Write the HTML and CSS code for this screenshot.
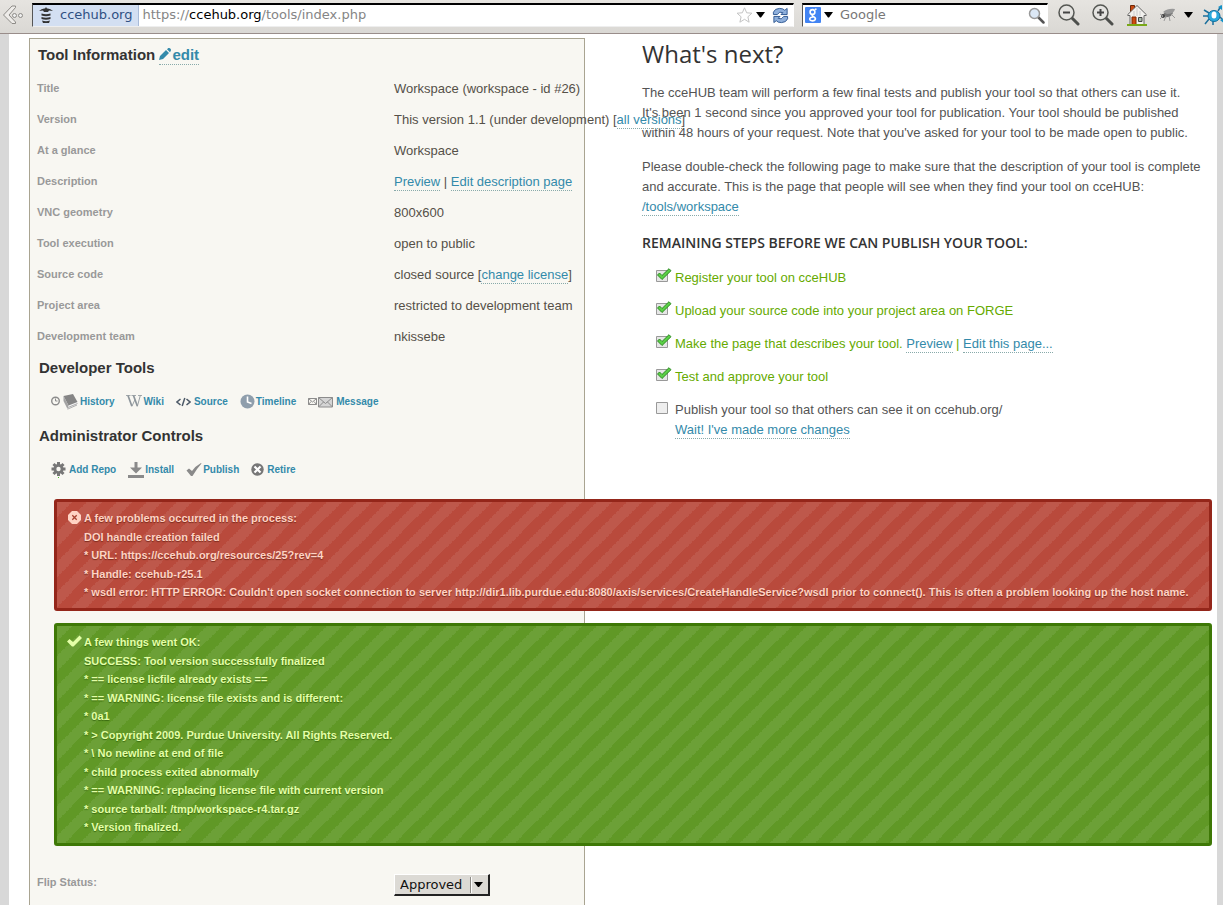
FILE: index.html
```html
<!DOCTYPE html>
<html lang="en">
<head>
<meta charset="utf-8">
<title>Tool Status - cceHUB</title>
<link rel="stylesheet" href="styles.css">
</head>
<body>
<header class="toolbar">
  <button class="tb-button back" aria-label="Back">
    <svg width="22" height="20" viewBox="0 0 22 20"><path d="M10 1h3.500v1.500L7 10l6.500 7v1.500H10L1.500 10z" fill="#eeece9" stroke="#8d8b87"/><g fill="#eee" stroke="#8d8b87"><circle cx="12.500" cy="10.500" r="2"/><circle cx="18.500" cy="10.500" r="2"/></g></svg>
  </button>
  <div class="urlbar">
    <span class="identity">
      <svg width="16" height="16" viewBox="0 0 16 16" fill="#333"><path d="M1 4q3-3 6-2.500L8 0l1 1.500Q12 1 15 4l-4-.5L10 5H6L5 3.500z"/><path d="M3.500 6.500q4.500 1.500 9 0v2q-4.500 1.500-9 0zM3.500 10q4.500 1.500 9 0v2q-4.500 1.500-9 0zM4 13.500q4 1.500 8 0L11 16H5z"/></svg>
      <span>ccehub.org</span>
    </span>
    <span class="url">https://<b>ccehub.org</b>/tools/index.php</span>
    <button class="tb-button" aria-label="Bookmark this page"><svg width="17" height="16" viewBox="0 0 16 16"><path d="M8 .8l2.200 5 5.200.4-4 3.600 1.200 5.400L8 12.300l-4.600 2.900 1.200-5.400-4-3.600 5.200-.4z" fill="#fff" stroke="#c4c4c4"/></svg></button>
    <button class="tb-button" aria-label="Show history"><svg width="9" height="6" viewBox="0 0 9 6"><path d="M0 0h9L5 5.500H4z"/></svg></button>
    <button class="tb-button reload" aria-label="Reload"><svg width="17" height="17" viewBox="0 0 18 18" fill="#8fb0dc" stroke="#2c5590"><path d="M1.500 8V5.500Q3 1.500 8 1.500q4 0 5.500 2l2.500-2V8H9.500L11.500 6Q8 4 5.500 8z"/><path d="M16.500 10v2.500Q15 16.500 10 16.500q-4 0-5.500-2l-2.500 2V10h6.500L6.500 12q3.500 2 6-2z"/></svg></button>
  </div>
  <div class="searchbar">
    <svg width="16" height="16" viewBox="0 0 16 16"><rect width="16" height="16" rx="1" fill="#4284f3"/><g fill="none" stroke="#fff" stroke-width="1.600"><circle cx="7.500" cy="5" r="2.400"/><path d="M10 2.500l1.500-.5M8.500 7.400Q6 8.500 8 9.500q3 1.200 2.300 3-1 1.700-3.600 1.300-2.600-.6-1.700-2.600.7-1.200 3-1.200"/></g></svg>
    <svg width="9" height="6" viewBox="0 0 9 6"><path d="M0 0h9L5 5.500H4z"/></svg>
    <input class="search-input" type="text" placeholder="Google" aria-label="Search">
    <svg width="17" height="17" viewBox="0 0 17 17"><path d="M10 10l5.500 5.500" stroke="#555" stroke-width="2.500" stroke-linecap="round"/><circle cx="6.500" cy="6.500" r="5" fill="#dce8f6" stroke="#999" stroke-width="1.500"/></svg>
  </div>
  <button class="tb-button" aria-label="Zoom out"><svg width="22" height="22" viewBox="0 0 22 22"><path d="M14 14l6 6" stroke="#4d4f4c" stroke-width="3" stroke-linecap="round"/><circle cx="8.500" cy="8.500" r="7.500" fill="#e4e3e0" stroke="#555753" stroke-width="1.500"/><path d="M5 8.500h7" stroke="#444" stroke-width="2"/></svg></button>
  <button class="tb-button zoom-in" aria-label="Zoom in"><svg width="22" height="22" viewBox="0 0 22 22"><path d="M14 14l6 6" stroke="#4d4f4c" stroke-width="3" stroke-linecap="round"/><circle cx="8.500" cy="8.500" r="7.500" fill="#e4e3e0" stroke="#555753" stroke-width="1.500"/><path d="M5 8.500h7M8.500 5v7" stroke="#444" stroke-width="2"/></svg></button>
  <button class="tb-button home" aria-label="Home"><svg width="20" height="22" viewBox="0 0 20 22"><path d="M3.500 1.500h4v7h-4z" fill="#c94a12" stroke="#6e2705"/><path d="M10 1.500L.8 10.500v1H3v9h14v-9h2.200v-1z" fill="#f2f1ee" stroke="#666"/><path d="M7 7v5M10 4v8M13 7v5" stroke="#ccc"/><path d="M5 13h4v7.500H5z" fill="#cf4a10" stroke="#7c2b06"/><path d="M11.500 13.500h3.500v4h-3.500z" fill="#aba" stroke="#444"/><path d="M0 21h20" stroke="#79a818" stroke-width="2"/></svg></button>
  <button class="tb-button" aria-label="Firebug"><svg width="17" height="14" viewBox="0 0 17 14"><ellipse cx="9" cy="6" rx="5" ry="3" fill="#777" transform="rotate(-20 9 6)"/><path d="M4 4q5-4 12-3-1 5-8 5z" fill="#999"/><circle cx="4" cy="8" r="2" fill="#444"/><path d="M1 6l3 2-3 3M7 8l-2 5M10 8l1 5M12 6l4 4" stroke="#999" fill="none"/></svg></button>
  <button class="tb-button" aria-label="More"><svg width="9" height="6" viewBox="0 0 9 6"><path d="M0 0h9L5 5.500H4z"/></svg></button>
  <button class="tb-button bug" aria-label="Live bug"><svg width="22" height="20" viewBox="0 0 22 20"><path d="M1 5l5 3M0 11h5M2 19l4-5M15 6l3-5M17 12l5 5M10 16v4" stroke="#1b6f9c" stroke-width="1.500"/><path d="M15 2l4-2v5zM17 15l5-2v6z" fill="#1492c8"/><ellipse cx="11" cy="11" rx="6" ry="5.500" fill="#29a9dd" stroke="#14709e"/><ellipse cx="11" cy="10" rx="2.500" ry="3.500" fill="#fff"/></svg></button>
</header>

<main class="page">
  <div class="panel-backdrop"></div>
  <section class="tool-info">
    <h3 class="panel-title">Tool Information <a class="link" href="#edit"><svg width="12" height="12" viewBox="0 0 12 12" fill="#338aaa"><path d="M0 12l1-4L7 2l3 3-6 6zM8 1.200L9.300 0Q10.300-.3 11.500.7q.8 1 .3 2L11 4.200z"/></svg>edit</a></h3>
    <table class="facts">
      <tr><th scope="row">Title</th><td>Workspace (workspace - id #26)</td></tr>
      <tr><th scope="row">Version</th><td>This version 1.1 (under development) [<a class="link" href="#versions">all versions</a>]</td></tr>
      <tr><th scope="row">At a glance</th><td>Workspace</td></tr>
      <tr><th scope="row">Description</th><td><a class="link" href="#preview">Preview</a> | <a class="link" href="#description">Edit description page</a></td></tr>
      <tr><th scope="row">VNC geometry</th><td>800x600</td></tr>
      <tr><th scope="row">Tool execution</th><td>open to public</td></tr>
      <tr><th scope="row">Source code</th><td>closed source [<a class="link" href="#license">change license</a>]</td></tr>
      <tr><th scope="row">Project area</th><td>restricted to development team</td></tr>
      <tr><th scope="row">Development team</th><td>nkissebe</td></tr>
    </table>
    <h3 class="group-title">Developer Tools</h3>
    <ul class="actions">
      <li><a href="#history"><svg width="28" height="16" viewBox="0 0 28 16"><circle cx="4.500" cy="7" r="3.800" fill="none" stroke="#8c8c8c" stroke-width="1.400"/><path d="M4.500 4.500V7h2" fill="none" stroke="#8c8c8c"/><path d="M12.500 2v5l4 8.500 10-4.500V8z" fill="#f6f6f6"/><path d="M12.500 2L22 0l4.500 8-9 3.500z" fill="#858585"/><path d="M12.500 2l5 9.500-1 3.500-4-8z" fill="#a2a2a2"/><path d="M17 13.500l9.500-4M16.500 15.200l9.500-4.200" stroke="#999" stroke-width=".8"/></svg>History</a></li>
      <li><a href="#wiki"><svg width="16" height="16" viewBox="0 0 16 16" fill="none" stroke="#8d959b"><path d="M0 1.500h4.500M5.500 1.500h4.500M12 1.500h4" stroke-width=".8"/><path d="M2 1.500l3.800 10.500M7.500 1.500l3.800 10.500" stroke-width="1.700"/><path d="M5.800 12.500l3-6.500M11.300 12.500l3-11" stroke-width=".9"/></svg>Wiki</a></li>
      <li><a href="#source"><svg class="wide-gap" width="15" height="16" viewBox="0 0 15 16" fill="none" stroke="#4d5a68" stroke-width="1.500"><path d="M4.500 5L1 8l3.500 3M10.500 5L14 8l-3.500 3M8.800 4l-2.600 8"/></svg>Source</a></li>
      <li><a href="#timeline"><svg width="15" height="16" viewBox="0 0 15 16"><circle cx="7.500" cy="7.500" r="7" fill="#8f9eac"/><path d="M7.500 2.500V8l4 1.500" fill="none" stroke="#fff" stroke-width="1.600"/></svg>Timeline</a></li>
      <li><a href="#message"><svg class="wide-gap" width="25" height="16" viewBox="0 0 25 16" fill="none" stroke="#8c8c8c"><path d="M.5 4.500h8v6h-8zM.5 4.500l4 3.500 4-3.500M.5 10.500L3 7.500M8.500 10.500L6 7.500"/><path d="M10.500 3.500h14v9.500h-14z" fill="#d5d5d5"/><path d="M10.500 3.500l7 6 7-6M10.500 13l5-5M24.500 13l-5-5"/></svg>Message</a></li>
    </ul>
    <h3 class="group-title">Administrator Controls</h3>
    <ul class="actions">
      <li><a href="#repo"><svg class="wide-gap" width="15" height="18" viewBox="0 0 15 18"><g stroke="#777" stroke-width="3"><path d="M7.500 1v14M.5 8h14M2.500 3l10 10M12.500 3l-10 10"/></g><circle cx="7.500" cy="8" r="5" fill="#777"/><circle cx="7.500" cy="8" r="2.200" fill="#f8f7f2"/><path d="M7 16.500h1" stroke="#4b2"/></svg>Add Repo</a></li>
      <li><a href="#install"><svg width="16" height="16" viewBox="0 0 16 16" fill="#8a8a8a"><path d="M6.500 0h3v5.500H14l-6 6-6-6h4.500zM0 13h16v3H0z"/></svg>Install</a></li>
      <li><a href="#publish"><svg width="16" height="16" viewBox="0 0 16 16"><path d="M.5 8.500L3 6.500 6 9Q9.500 4 15 1l.5.500Q10.500 7 6.500 14H5z" fill="#8a8a8a"/></svg>Publish</a></li>
      <li><a href="#retire"><svg class="wide-gap" width="13" height="16" viewBox="0 0 13 16"><circle cx="6.500" cy="7.500" r="6.200" fill="#777"/><path d="M3.500 4.500l6 6M9.500 4.500l-6 6" stroke="#fff" stroke-width="2.200"/></svg>Retire</a></li>
    </ul>
  </section>

  <aside class="next">
    <h2>What's next?</h2>
    <p>The cceHUB team will perform a few final tests and publish your tool so that others can use it.<br>It's been 1 second since you approved your tool for publication. Your tool should be published<br>within 48 hours of your request. Note that you've asked for your tool to be made open to public.</p>
    <p>Please double-check the following page to make sure that the description of your tool is complete and accurate. This is the page that people will see when they find your tool on cceHUB: <a class="link" href="#workspace">/tools/workspace</a></p>
    <h4>REMAINING STEPS BEFORE WE CAN PUBLISH YOUR TOOL:</h4>
    <ul class="steps">
      <li class="done"><svg width="16" height="15" viewBox="0 0 16 15"><path d="M.5 2.500h11v11H.5z" fill="#e6e6e6" stroke="#999"/><path d="M1.500 7l2-2 2.500 2.500L13 .7l2 2L6 11.500z" fill="#5bd046" stroke="#2c8a22"/></svg>Register your tool on cceHUB</li>
      <li class="done"><svg width="16" height="15" viewBox="0 0 16 15"><path d="M.5 2.500h11v11H.5z" fill="#e6e6e6" stroke="#999"/><path d="M1.500 7l2-2 2.500 2.500L13 .7l2 2L6 11.500z" fill="#5bd046" stroke="#2c8a22"/></svg>Upload your source code into your project area on FORGE</li>
      <li class="done"><svg width="16" height="15" viewBox="0 0 16 15"><path d="M.5 2.500h11v11H.5z" fill="#e6e6e6" stroke="#999"/><path d="M1.500 7l2-2 2.500 2.500L13 .7l2 2L6 11.500z" fill="#5bd046" stroke="#2c8a22"/></svg><span>Make the page that describes your tool. <a class="link" href="#preview">Preview</a> | <a class="link" href="#page">Edit this page...</a></span></li>
      <li class="done"><svg width="16" height="15" viewBox="0 0 16 15"><path d="M.5 2.500h11v11H.5z" fill="#e6e6e6" stroke="#999"/><path d="M1.500 7l2-2 2.500 2.500L13 .7l2 2L6 11.500z" fill="#5bd046" stroke="#2c8a22"/></svg>Test and approve your tool</li>
      <li><svg width="16" height="15" viewBox="0 0 16 15"><path d="M.5 2.500h11v11H.5z" fill="#eee" stroke="#999"/></svg><span>Publish your tool so that others can see it on ccehub.org/<br><a class="link" href="#changes">Wait! I've made more changes</a></span></li>
    </ul>
  </aside>

  <div class="alerts">
    <section class="alert error">
      <svg width="15" height="13" viewBox="0 0 15 13"><path d="M5 0h5l4 4v5l-4 4H5L1 9V4z" fill="#ffd3c4"/><path d="M5.300 4.300l4.400 4.400M9.700 4.300L5.300 8.700" stroke="#a8402f" stroke-width="1.300"/></svg>
      <div class="alert-text">
        <p>A few problems occurred in the process:</p>
        <p>DOI handle creation failed</p>
        <p>* URL: https://ccehub.org/resources/25?rev=4</p>
        <p>* Handle: ccehub-r25.1</p>
        <p>* wsdl error: HTTP ERROR: Couldn't open socket connection to server http://dir1.lib.purdue.edu:8080/axis/services/CreateHandleService?wsdl prior to connect(). This is often a problem looking up the host name.</p>
      </div>
    </section>
    <section class="alert success">
      <svg width="15" height="13" viewBox="0 0 15 13"><path d="M0 6.500L2.500 4 6 7l6.500-6.500L15 3 6.500 11.500H5z" fill="#e4ffa8"/></svg>
      <div class="alert-text">
        <p>A few things went OK:</p>
        <p>SUCCESS: Tool version successfully finalized</p>
        <p>* == license licfile already exists ==</p>
        <p>* == WARNING: license file exists and is different:</p>
        <p>* 0a1</p>
        <p>* &gt; Copyright 2009. Purdue University. All Rights Reserved.</p>
        <p>* \ No newline at end of file</p>
        <p>* child process exited abnormally</p>
        <p>* == WARNING: replacing license file with current version</p>
        <p>* source tarball: /tmp/workspace-r4.tar.gz</p>
        <p>* Version finalized.</p>
      </div>
    </section>
  </div>

  <form class="status">
    <label for="status">Flip Status:</label>
    <span class="select-box">
      <select id="status"><option>Approved</option></select>
      <svg width="20" height="18" viewBox="0 0 20 18"><path d="M1.500 1v16" stroke="#8d8b86"/><path d="M2.500 1v16" stroke="#fff"/><path d="M5 6h9l-4 5H9z"/></svg>
    </span>
  </form>
</main>
</body>
</html>
```
FILE: styles.css
```css
* { box-sizing: border-box; }

body {
  margin: 0;
  min-height: 100vh;
  display: flex;
  flex-direction: column;
  background: #d8d8d8;
  color: #545454;
  font: 13px/20px "Liberation Sans", Arial, sans-serif;
}

h2, h3, h4, p, ul { margin: 0; padding: 0; }
ul { list-style: none; }

.toolbar {
  display: flex;
  align-items: center;
  height: 34px;
  padding: 0 0 4px;
  border-bottom: 1px solid #998d8a;
  background: linear-gradient(#e6e4e0, #dad8d4);
  font: 13px/20px "DejaVu Sans", sans-serif;
  overflow: hidden;
}

.toolbar svg { display: block; flex: none; }

.tb-button {
  flex: none;
  padding: 0;
  border: 0;
  background: none;
}

.back { margin: 0 8px 0 2px; }
.zoom-in { margin: 0 13px 0 12px; }
.home { margin-right: 12px; }
.bug { margin: 0 -2px 0 10px; }
.tb-button:nth-last-child(2) { margin-left: 8px; }

.urlbar, .searchbar {
  display: flex;
  align-items: center;
  height: 24px;
  border: 1px solid #555;
  border-top: 2px solid #000;
  border-right-color: #fff;
  border-bottom-color: #eee;
  background: #fff;
}

.urlbar { flex: 1; }

.identity {
  display: flex;
  align-items: center;
  gap: 6px;
  height: 21px;
  padding: 0 6px 0 5px;
  border-right: 1px solid #a9bbd8;
  background: #d3dff2;
  color: #2f5083;
}

.url {
  flex: 1;
  padding-left: 3px;
  color: #858585;
}

.url b { color: #000; font-weight: 400; }

.urlbar .tb-button + .tb-button { margin-left: 3px; }
.urlbar .reload.tb-button { margin: 0 4px 0 7px; }

.searchbar {
  width: 246px;
  margin: 0 10px 0 8px;
  padding: 0 2px;
  gap: 3px;
}

.search-input {
  flex: 1;
  min-width: 0;
  height: 20px;
  padding: 0 0 0 4px;
  border: 0;
  background: none;
  font: inherit;
}

.search-input::placeholder { color: #777; opacity: 1; }

.page {
  flex: 1;
  display: grid;
  grid-template-columns: 47% 1fr;
  grid-template-rows: auto auto 1fr;
  column-gap: 57px;
  margin: 0 6px 0 9px;
  padding: 4px 5px 0 20px;
  background: #fff;
}

.panel-backdrop {
  grid-area: 1 / 1 / 4 / 2;
  border: 1px solid #a9a491;
  border-bottom: 0;
  background: #f8f7f2;
}

.tool-info { grid-area: 1 / 1; padding: 7px 8px 0; }
.next { grid-area: 1 / 2; }
.alerts { grid-area: 2 / 1 / 3 / 3; padding: 5px 0 0 25px; }
.status { grid-area: 3 / 1; }
.tool-info, .alerts, .status { position: relative; }

.link {
  color: #338aaa;
  text-decoration: none;
  padding-bottom: 1px;
  border-bottom: 1px dotted #8aa;
}

h3 {
  color: #333;
  font-size: 15px;
  line-height: 20px;
}

.panel-title { padding: 0 1px 7px; }
.panel-title svg { margin-right: 1px; }
.group-title { padding: 0 2px; }

.facts {
  width: 100%;
  border-collapse: collapse;
  table-layout: fixed;
}

.facts th, .facts td {
  height: 31px;
  padding: 2px 0 0;
  text-align: left;
  white-space: nowrap;
}

.facts th {
  width: 357px;
  padding: 0;
  color: #999;
  font-size: 11px;
}

.facts td { color: #555048; }

.facts + .group-title { margin-top: 7px; }

.actions {
  display: flex;
  gap: 12px;
  padding: 14px 14px;
}

.actions a {
  display: flex;
  align-items: center;
  gap: 1px;
  height: 20px;
  color: #338aaa;
  font: bold 10px/20px "Liberation Sans", Arial, sans-serif;
  text-decoration: none;
}

.wide-gap { margin-right: 2px; }

.next h2 {
  margin-bottom: 13px;
  color: #333;
  font: 24px/32px "Open Sans", sans-serif;
}

.next p { margin-bottom: 14px; }

.next h4 {
  margin-top: 16px;
  color: #333;
  font: 600 14px/20px "Open Sans", sans-serif;
}

.steps { padding: 15px 0 0 14px; }

.steps li {
  display: flex;
  align-items: flex-start;
  gap: 3px;
  padding-bottom: 13px;
}

.steps .done { color: #6a0; }
.steps svg { flex: none; }

.alert {
  display: flex;
  align-items: flex-start;
  gap: 2px;
  margin-bottom: 12px;
  padding: 7px 4px 6px 10px;
  border: 3px solid;
  border-radius: 3px;
  font: bold 11px/18px "Liberation Sans", Arial, sans-serif;
  background-image: linear-gradient(-45deg, #0000 25%, #ffffff14 25%, #ffffff14 50%, #0000 50%, #0000 75%, #ffffff14 75%);
  background-size: 30px 30px;
}

.alert svg { flex: none; margin-top: 2px; }
.alert-text p:nth-child(odd) { margin-bottom: 1px; }

.error {
  border-color: #94261a;
  background-color: #b94a3c;
  color: #ffd3c4;
  text-shadow: 0 1px 1px #7a2a1c;
}

.success {
  border-color: #3e7806;
  background-color: #609826;
  color: #e4ffa8;
  text-shadow: 0 1px 1px #3a6a10;
}

.status {
  display: flex;
  align-items: flex-start;
  padding: 14px 8px;
}

.status label {
  width: 357px;
  color: #999;
  font-size: 11px;
  font-weight: 700;
}

.select-box {
  position: relative;
  padding-top: 2px;
}

.select-box select {
  appearance: none;
  height: 22px;
  width: 96px;
  padding: 0 20px 0 5px;
  border: 1px solid #fff;
  border-right: 2px solid #222;
  border-bottom: 2px solid #222;
  border-radius: 0;
  background: #dcdad5;
  color: #111;
  font: 13px/18px "DejaVu Sans", sans-serif;
}

.select-box svg {
  position: absolute;
  top: 4px;
  right: 1px;
  pointer-events: none;
}
```
